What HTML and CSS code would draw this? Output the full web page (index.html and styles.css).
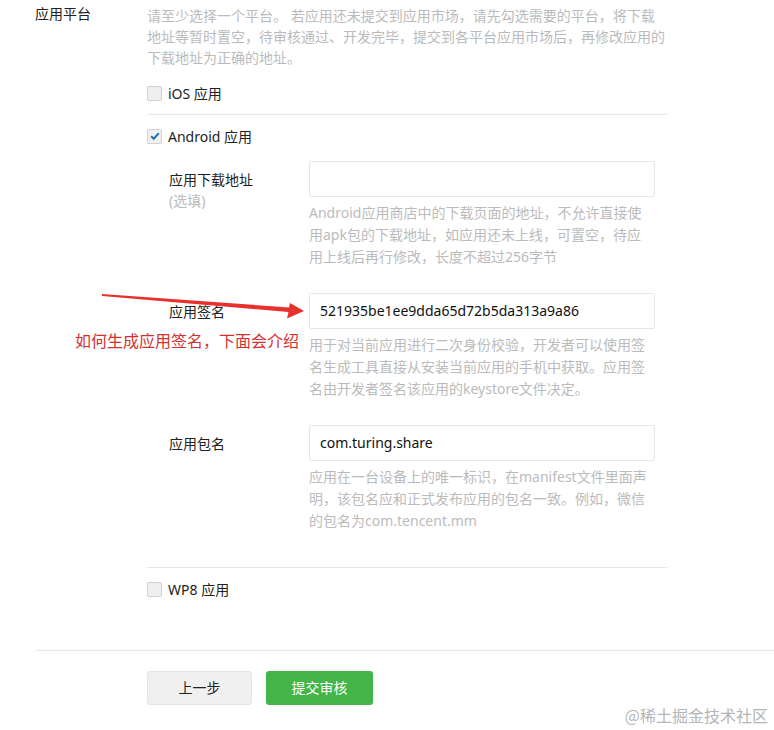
FILE: index.html
```html
<!DOCTYPE html>
<html>
	<head>
		<meta charset="UTF-8">
		<title>应用平台</title>
		<link rel="stylesheet" href="styles.css">
	</head>
	<body>
		<div class="page">
			<!--应用平台-->
			<div class="form-row">
				<div class="row-label">应用平台</div>
				<div class="row-body">
					<p class="tips">请至少选择一个平台。 若应用还未提交到应用市场，请先勾选需要的平台，将下载地址等暂时置空，待审核通过、开发完毕，提交到各平台应用市场后，再修改应用的下载地址为正确的地址。</p>

					<!-- iOS -->
					<div class="platform">
						<label class="check"><span class="box"></span>iOS 应用</label>
					</div>

					<!-- Android -->
					<div class="platform">
						<label class="check">
							<span class="box">
								<svg width="12" height="12" viewBox="0 0 12 12"><path d="M2.2 6.2 L4.8 8.7 L9.8 3.2" fill="none" stroke="#1f6fb5" stroke-width="2"/></svg>
							</span>Android 应用
						</label>
						<div class="sub-form">
							<div class="sub-row">
								<div class="sub-label">应用下载地址<span class="optional">(选填)</span></div>
								<div class="sub-body">
									<div class="input"></div>
									<p class="hint">Android应用商店中的下载页面的地址，不允许直接使用apk包的下载地址，如应用还未上线，可置空，待应<br>用上线后再行修改，长度不超过256字节</p>
								</div>
							</div>
							<div class="sub-row">
								<div class="sub-label">应用签名</div>
								<div class="sub-body">
									<div class="input">521935be1ee9dda65d72b5da313a9a86</div>
									<p class="hint">用于对当前应用进行二次身份校验，开发者可以使用签名生成工具直接从安装当前应用的手机中获取。应用签名由开发者签名该应用的keystore文件决定。</p>
								</div>
							</div>
							<div class="sub-row">
								<div class="sub-label">应用包名</div>
								<div class="sub-body">
									<div class="input">com.turing.share</div>
									<p class="hint">应用在一台设备上的唯一标识，在manifest文件里面声明，该包名应和正式发布应用的包名一致。例如，微信的包名为com.tencent.mm</p>
								</div>
							</div>
						</div>
					</div>

					<!-- WP8 -->
					<div class="platform">
						<label class="check"><span class="box"></span>WP8 应用</label>
					</div>
				</div>
			</div>

			<!--按钮-->
			<div class="actions">
				<div class="btn btn-default">上一步</div>
				<div class="btn btn-primary">提交审核</div>
			</div>
		</div>

		<!--标注-->
		<svg class="mark-arrow" width="774" height="730" viewBox="0 0 774 730">
			<polygon points="102,294 289,307.5 290,303 304,311 287,318.5 288.5,312 102,296" fill="#e8302c"/>
		</svg>
		<div class="mark-text">如何生成应用签名，下面会介绍</div>
		<div class="watermark">@稀土掘金技术社区</div>
	</body>
</html>
```
FILE: styles.css
```css
body,div,p,span,label{
	margin: 0px;
	padding: 0px;
}
body{
	background-color: #fff;
	font-family: "Noto Sans", "Noto Sans CJK SC", sans-serif;
	font-size: 14px;
	color: #353535;
	width: 774px;
	height: 730px;
	overflow: hidden;
	position: relative;
}
.page{
	padding-left: 35px;
}
/*应用平台 start*/
.form-row{
	display: flex;
	margin-bottom: 40px;
}
.form-row .row-label{
	width: 112px;
	line-height: 21px;
	padding-top: 3px;
	color: #222;
}
.form-row .row-body{
	width: 520px;
}
.tips{
	line-height: 21px;
	padding-top: 5px;
	margin-bottom: 4px;
	color: #bbb;
}
.platform + .platform{
	border-top: 1px solid #e7e7e7;
}
.check{
	height: 42px;
	display: flex;
	align-items: center;
	color: #222;
	font-size: 14px;
}
.check .box{
	width: 15px;
	height: 15px;
	margin-right: 6px;
	border: 1px solid #d2d2d2;
	border-radius: 2px;
	background-color: #efefef;
	box-sizing: border-box;
	display: flex;
	align-items: center;
	justify-content: center;
}
/*应用平台 end*/

/*子表单 start*/
.sub-form{
	padding: 4px 0 35px 22px;
}
.sub-row{
	display: flex;
	margin-bottom: 25px;
}
.sub-row:last-child{
	margin-bottom: 0;
}
.sub-label{
	width: 140px;
	padding-top: 8px;
	line-height: 21px;
	color: #222;
}
.sub-label .optional{
	display: block;
	color: #bbb;
}
.sub-body{
	width: 346px;
}
.input{
	height: 36px;
	line-height: 34px;
	padding: 0 10px;
	border: 1px solid #e7e7e7;
	border-radius: 2px;
	box-sizing: border-box;
	color: #111;
}
.hint{
	margin-top: 5px;
	line-height: 22px;
	color: #bbb;
}
/*子表单 end*/

/*按钮 start*/
.actions{
	border-top: 1px solid #e7e7e7;
	padding: 20px 0 0 112px;
	display: flex;
	gap: 14px;
}
.btn{
	width: 105px;
	height: 34px;
	line-height: 34px;
	text-align: center;
	border-radius: 3px;
	box-sizing: border-box;
	cursor: pointer;
}
.btn-default{
	background-color: #f0f0f0;
	border: 1px solid #e4e4e4;
	line-height: 32px;
	color: #222;
}
.btn-primary{
	width: 107px;
	background-color: #44b549;
	color: #fff;
}
/*按钮 end*/

/*标注*/
.mark-arrow{
	position: absolute;
	left: 0;
	top: 0;
	pointer-events: none;
}
.mark-text{
	position: absolute;
	left: 75px;
	top: 329px;
	font-size: 16px;
	line-height: 22px;
	color: #d2322e;
	font-family: "Noto Sans CJK SC", sans-serif;
}
.watermark{
	position: absolute;
	right: 6px;
	top: 704px;
	font-size: 16px;
	line-height: 22px;
	color: #b5b5b5;
	font-family: "Noto Sans CJK SC", sans-serif;
}
```
